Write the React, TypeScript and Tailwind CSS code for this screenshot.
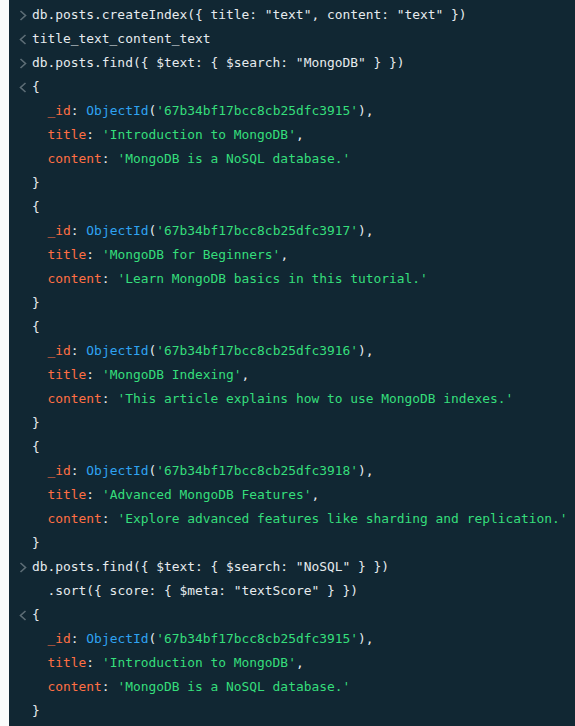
import React from "react";

type Tok = { t: string; c?: "key" | "str" | "fn" };
type Line = { prompt?: "in" | "out"; indent?: number; toks: Tok[] };

const color = {
  key: "text-[#ff6f44]",
  str: "text-[#35de7b]",
  fn: "text-[#2fa3f2]",
};

const doc = (id: string, title: string, content: string, first?: boolean): Line[] => [
  { prompt: first ? "out" : undefined, toks: [{ t: "{" }] },
  {
    indent: 2,
    toks: [
      { t: "_id", c: "key" },
      { t: ": " },
      { t: "ObjectId", c: "fn" },
      { t: "(" },
      { t: `'${id}'`, c: "str" },
      { t: ")," },
    ],
  },
  { indent: 2, toks: [{ t: "title", c: "key" }, { t: ": " }, { t: `'${title}'`, c: "str" }, { t: "," }] },
  { indent: 2, toks: [{ t: "content", c: "key" }, { t: ": " }, { t: `'${content}'`, c: "str" }] },
  { toks: [{ t: "}" }] },
];

const lines: Line[] = [
  { prompt: "in", toks: [{ t: 'db.posts.createIndex({ title: "text", content: "text" })' }] },
  { prompt: "out", toks: [{ t: "title_text_content_text" }] },
  { prompt: "in", toks: [{ t: 'db.posts.find({ $text: { $search: "MongoDB" } })' }] },
  ...doc("67b34bf17bcc8cb25dfc3915", "Introduction to MongoDB", "MongoDB is a NoSQL database.", true),
  ...doc("67b34bf17bcc8cb25dfc3917", "MongoDB for Beginners", "Learn MongoDB basics in this tutorial."),
  ...doc("67b34bf17bcc8cb25dfc3916", "MongoDB Indexing", "This article explains how to use MongoDB indexes."),
  ...doc(
    "67b34bf17bcc8cb25dfc3918",
    "Advanced MongoDB Features",
    "Explore advanced features like sharding and replication."
  ),
  { prompt: "in", toks: [{ t: 'db.posts.find({ $text: { $search: "NoSQL" } })' }] },
  { indent: 2, toks: [{ t: '.sort({ score: { $meta: "textScore" } })' }] },
  ...doc("67b34bf17bcc8cb25dfc3915", "Introduction to MongoDB", "MongoDB is a NoSQL database.", true),
];

const Chevron = ({ dir }: { dir: "in" | "out" }) => (
  <svg width="8" height="11" viewBox="0 0 8 11" fill="none">
    <path
      d={dir === "in" ? "M1.5 1L6.5 5.5L1.5 10" : "M6.5 1L1.5 5.5L6.5 10"}
      stroke="#5d6d76"
      strokeWidth="1.6"
    />
  </svg>
);

export default function App() {
  return (
    <div className="flex h-[726px] w-[575px] overflow-hidden">
      <div className="w-[9px] shrink-0 bg-[#f9fbfa]" />
      <div className="flex-1 bg-[#112733] pt-[3px] font-['DejaVu_Sans_Mono',monospace] text-[12.9px] text-[#e6ebee]">
        {lines.map((ln, i) => (
          <div key={i} className="flex h-6 items-center">
            <div className="flex w-[23px] shrink-0 items-center pl-[10px]">
              {ln.prompt && <Chevron dir={ln.prompt} />}
            </div>
            <div className="whitespace-pre">
              {ln.indent ? "  " : ""}
              {ln.toks.map((tk, j) => (
                <span key={j} className={tk.c ? color[tk.c] : undefined}>
                  {tk.t}
                </span>
              ))}
            </div>
          </div>
        ))}
      </div>
    </div>
  );
}
